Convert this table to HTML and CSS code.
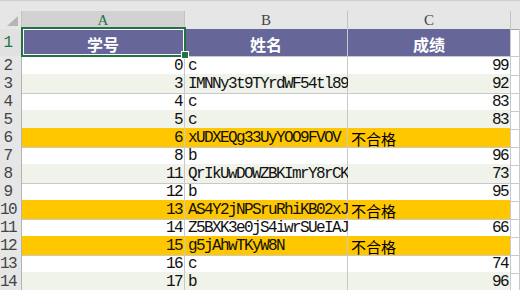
FILE: index.html
```html
<!DOCTYPE html>
<html lang="zh">
<head>
<meta charset="utf-8">
<title>成绩表</title>
<link rel="stylesheet" href="styles.css">
</head>
<body>
<div class="sheet">
  <div class="topbar"></div>
  <div class="row colheads">
    <div class="corner"><svg width="12" height="11" viewBox="0 0 12 11"><polygon points="11,0 11,10 0,10" fill="#b5b5b5"/></svg></div>
    <div class="colhead sel">A</div>
    <div class="colhead">B</div>
    <div class="colhead">C</div>
    <div class="colhead end"></div>
  </div>
  <div class="row r1">
    <div class="rowhead sel">1</div>
    <div class="cell th active">学号<span class="selbox"></span><span class="handle"></span></div>
    <div class="cell th">姓名</div>
    <div class="cell th">成绩</div>
    <div class="cell"></div>
  </div>
  <div class="row"><div class="rowhead">2</div><div class="cell num">0</div><div class="cell">c</div><div class="cell num">99</div><div class="cell"></div></div>
  <div class="row alt"><div class="rowhead">3</div><div class="cell num">3</div><div class="cell">IMNNy3t9TYrdWF54tl89</div><div class="cell num">92</div><div class="cell"></div></div>
  <div class="row"><div class="rowhead">4</div><div class="cell num">4</div><div class="cell">c</div><div class="cell num">83</div><div class="cell"></div></div>
  <div class="row alt"><div class="rowhead">5</div><div class="cell num">5</div><div class="cell">c</div><div class="cell num">83</div><div class="cell"></div></div>
  <div class="row fail"><div class="rowhead">6</div><div class="cell num">6</div><div class="cell">xUDXEQg33UyYOO9FVOV</div><div class="cell cjk">不合格</div><div class="cell"></div></div>
  <div class="row"><div class="rowhead">7</div><div class="cell num">8</div><div class="cell">b</div><div class="cell num">96</div><div class="cell"></div></div>
  <div class="row alt"><div class="rowhead">8</div><div class="cell num">11</div><div class="cell">QrIkUwDOWZBKImrY8rCK</div><div class="cell num">73</div><div class="cell"></div></div>
  <div class="row"><div class="rowhead">9</div><div class="cell num">12</div><div class="cell">b</div><div class="cell num">95</div><div class="cell"></div></div>
  <div class="row fail"><div class="rowhead">10</div><div class="cell num">13</div><div class="cell">AS4Y2jNPSruRhiKB02xJ</div><div class="cell cjk">不合格</div><div class="cell"></div></div>
  <div class="row"><div class="rowhead">11</div><div class="cell num">14</div><div class="cell">Z5BXK3e0jS4iwrSUeIAJ</div><div class="cell num">66</div><div class="cell"></div></div>
  <div class="row fail"><div class="rowhead">12</div><div class="cell num">15</div><div class="cell">g5jAhwTKyW8N</div><div class="cell cjk">不合格</div><div class="cell"></div></div>
  <div class="row"><div class="rowhead">13</div><div class="cell num">16</div><div class="cell">c</div><div class="cell num">74</div><div class="cell"></div></div>
  <div class="row alt"><div class="rowhead">14</div><div class="cell num">17</div><div class="cell">b</div><div class="cell num">96</div><div class="cell"></div></div>
</div>
</body>
</html>
```
FILE: styles.css
```css
html, body {
  margin: 0;
  padding: 0;
  background: #ffffff;
  overflow: hidden;
}

.sheet {
  width: 520px;
  height: 290px;
  overflow: hidden;
  font-family: "Liberation Mono", "Noto Sans CJK SC", monospace;
  font-size: 16px;
  letter-spacing: -1.6px;
  color: #111;
}

.topbar {
  height: 11px;
  box-sizing: border-box;
  background: #e6e6e6;
  border-top: 1px solid #cfcfcf;
}

.row {
  display: grid;
  grid-template-columns: 22px 163px 163px 163px 1fr;
  height: 18px;
}

.row > div {
  box-sizing: border-box;
  border-right: 1px solid #c9c9c9;
  border-bottom: 1px solid #c9c9c9;
  white-space: nowrap;
  overflow: visible;
}

.colheads {
  background: #e6e6e6;
}

.colheads > div {
  border-bottom: 1px solid #a3a3a3;
  border-right-color: #c2c2c2;
}

.corner {
  display: flex;
  justify-content: flex-end;
  align-items: flex-end;
  padding: 0 2px 2px 0;
}

.colhead {
  text-align: center;
  line-height: 17px;
  padding-top: 1px;
  color: #444;
  font-family: "Liberation Serif", serif;
  font-size: 15px;
  letter-spacing: 0;
}

.colhead.sel {
  background: #d2d2d2;
  color: #217346;
}

.colhead.end {
  border-right: none;
}

.rowhead {
  background: #e6e6e6;
  color: #444;
  text-align: center;
  padding-right: 6px;
  line-height: 17px;
  padding-top: 2px;
}

.row > .rowhead {
  border-right-color: #b3b3b3;
}

.rowhead.sel {
  color: #217346;
}

.cell {
  line-height: 17px;
  padding: 2px 2px 0 3px;
}

.cell.num {
  text-align: right;
}

.cell.cjk {
  font-family: "Noto Sans CJK SC", sans-serif;
  font-size: 15px;
  letter-spacing: 0;
  line-height: 17px;
  padding-top: 2px;
  color: #000;
}

.row.alt > .cell:nth-child(-n+4) {
  background: #eff3ea;
}

.row.fail > .cell:nth-child(-n+4) {
  background: #ffc700;
}

.r1 {
  height: 27px;
}

.r1 .rowhead {
  line-height: 25px;
  padding-top: 2px;
  background: #e1e1e1;
}

.cell.th {
  background: #666699;
  color: #ffffff;
  font-family: "Noto Sans CJK SC", sans-serif;
  font-weight: bold;
  font-size: 16px;
  letter-spacing: 0;
  text-align: center;
  line-height: 24px;
  padding: 3px 0 0 0;
}

.cell.active {
  position: relative;
}

.selbox {
  position: absolute;
  left: -1px;
  top: -2px;
  width: 165px;
  height: 30px;
  box-sizing: border-box;
  border: 2px solid #217346;
  box-shadow: inset 0 0 0 1px #ffffff;
}

.handle {
  position: absolute;
  left: 160px;
  top: 23px;
  width: 6px;
  height: 6px;
  background: #217346;
  box-shadow: 0 0 0 1px #ffffff;
}
```
